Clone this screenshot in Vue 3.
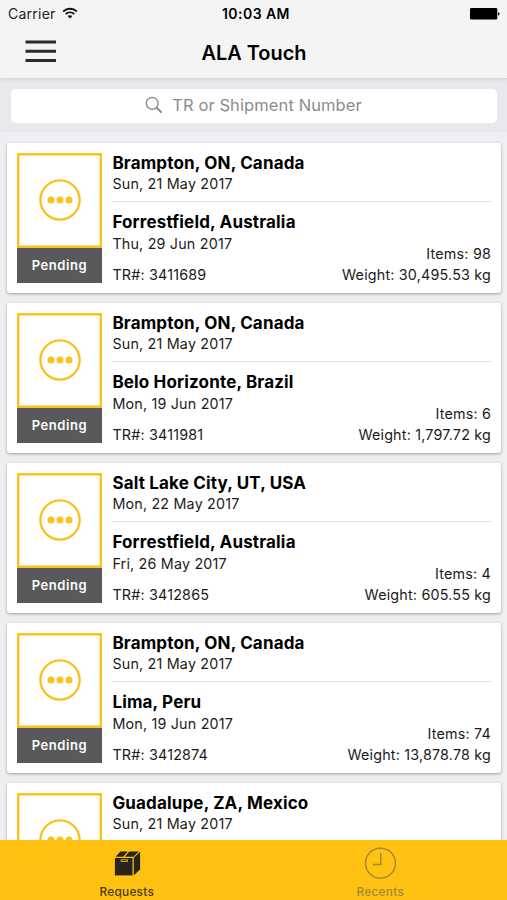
<script setup>
const shipments = [
  { from: 'Brampton, ON, Canada', departs: 'Sun, 21 May 2017', to: 'Forrestfield, Australia', arrives: 'Thu, 29 Jun 2017', tr: '3411689', items: '98', weight: '30,495.53' },
  { from: 'Brampton, ON, Canada', departs: 'Sun, 21 May 2017', to: 'Belo Horizonte, Brazil', arrives: 'Mon, 19 Jun 2017', tr: '3411981', items: '6', weight: '1,797.72' },
  { from: 'Salt Lake City, UT, USA', departs: 'Mon, 22 May 2017', to: 'Forrestfield, Australia', arrives: 'Fri, 26 May 2017', tr: '3412865', items: '4', weight: '605.55' },
  { from: 'Brampton, ON, Canada', departs: 'Sun, 21 May 2017', to: 'Lima, Peru', arrives: 'Mon, 19 Jun 2017', tr: '3412874', items: '74', weight: '13,878.78' },
  { from: 'Guadalupe, ZA, Mexico', departs: 'Sun, 21 May 2017' },
]
</script>

<template>
  <div class="screen">
    <header class="header">
      <div class="status">
        <div class="carrier">
          <span>Carrier</span>
          <svg class="wifi" width="16" height="12" viewBox="0 0 16 12">
            <path d="M1.2 4.5C5 .9 11 .9 14.8 4.5M3.7 7.1c2.5-2.3 6.1-2.3 8.6 0" fill="none" stroke="#111" stroke-width="1.9" />
            <path d="M5.6 9.1c1.4-1.2 3.4-1.2 4.8 0L8 11.6z" fill="#111" />
          </svg>
        </div>
        <span class="time">10:03 AM</span>
        <svg class="battery" width="30" height="12" viewBox="0 0 30 12">
          <rect x="0" y="0" width="27.3" height="11.5" rx="1.3" fill="#000" />
          <path d="M28.1 4c1.9.6 1.9 3.2 0 3.8z" fill="#000" />
        </svg>
      </div>
      <div class="nav">
        <svg class="menu" width="32" height="24" viewBox="0 0 32 24">
          <path d="M.5 2.1h30.5M.5 11.3h30.5M.5 20.5h30.5" stroke="#2b2b2d" stroke-width="3" />
        </svg>
        <h1>ALA Touch</h1>
        <span></span>
      </div>
    </header>

    <div class="search">
      <div class="field">
        <svg width="18" height="18" viewBox="0 0 18 18" fill="none" stroke="#8b8b8e">
          <circle cx="7.2" cy="7.3" r="5.9" stroke-width="1.4" />
          <path d="M11.4 11.5l5.2 5.1" stroke-width="2" />
        </svg>
        <span>TR or Shipment Number</span>
      </div>
    </div>

    <main class="list">
      <article v-for="(s, i) in shipments" :key="i" class="card">
        <div class="badge">
          <div class="frame">
            <svg width="42" height="42" viewBox="0 0 42 42">
              <circle cx="21" cy="21" r="19.6" fill="none" stroke="#fcc11c" stroke-width="2.3" />
              <g fill="#fcc11c">
                <circle cx="12" cy="21" r="3.5" />
                <circle cx="21" cy="21" r="3.5" />
                <circle cx="30" cy="21" r="3.5" />
              </g>
            </svg>
          </div>
          <div v-if="s.to" class="state">Pending</div>
        </div>
        <div class="info">
          <div class="leg origin">
            <h2>{{ s.from }}</h2>
            <p>{{ s.departs }}</p>
          </div>
          <div v-if="s.to" class="details">
            <div class="leg">
              <h2>{{ s.to }}</h2>
              <p>{{ s.arrives }}</p>
              <p class="tr">TR#: {{ s.tr }}</p>
            </div>
            <div class="totals">
              <p>Items: {{ s.items }}</p>
              <p>Weight: {{ s.weight }} kg</p>
            </div>
          </div>
        </div>
      </article>
    </main>

    <footer class="tabs">
      <div class="tab active">
        <svg width="32" height="32" viewBox="0 0 32 32" fill="#29251c">
          <path d="M3.9 11h17.6v17.4H3.9z" />
          <path d="M4.6 9.7L9.4 4.4h7.4l-4.6 5.3zM13.8 9.7l4.5-5.3h9.6l-5.4 5.3z" />
          <path d="M22.8 10.8l6.3-6v17.6l-6.3 5.8z" />
          <path d="M9.7 12.4h7.2v2.4H9.7z" fill="#ffc112" />
          <path d="M10.5 13.2h5.6v.8h-5.6z" />
        </svg>
        <span>Requests</span>
      </div>
      <div class="tab">
        <svg width="32" height="32" viewBox="0 0 32 32" fill="none" stroke="#a2893a" stroke-width="1.5">
          <circle cx="16.5" cy="16.2" r="15" />
          <path d="M16.7 6v11.5H9" />
        </svg>
        <span>Recents</span>
      </div>
    </footer>
  </div>
</template>

<style>
body {
  margin: 0;
  overflow: hidden;
}
</style>

<style scoped>
.screen {
  width: 507px;
  height: 900px;
  display: flex;
  flex-direction: column;
  overflow: hidden;
  background: #efeff2;
  color: #000;
  font-family: Inter, "Liberation Sans", sans-serif;
}
h1, h2, p {
  margin: 0;
}
svg {
  display: block;
  flex: none;
}
.header {
  height: 78px;
  flex: none;
  background: #f4f4f4;
  border-bottom: 1px solid #d8d8da;
  box-shadow: 0 1px 2px rgba(0, 0, 0, .08);
  z-index: 1;
}
.status {
  height: 27px;
  padding: 0 7px 0 8px;
  display: grid;
  grid-template-columns: 1fr auto 1fr;
  align-items: center;
  font-size: 14px;
  line-height: 27px;
}
.carrier {
  display: flex;
  align-items: center;
  gap: 6px;
  letter-spacing: .25px;
  color: #222;
}
.wifi {
  margin-bottom: 2px;
}
.time {
  font-weight: 600;
  letter-spacing: .45px;
  padding-left: 4px;
}
.battery {
  justify-self: end;
}
.nav {
  height: 51px;
  padding: 0 24px 0 25px;
  display: grid;
  grid-template-columns: 1fr auto 1fr;
  align-items: center;
}
.menu {
  margin-bottom: 2px;
}
.nav h1 {
  font-size: 19.9px;
  font-weight: 600;
  line-height: 50px;
}
.search {
  height: 34px;
  flex: none;
  padding: 10px 10px 9px 11px;
  background: #e8e8ed;
}
.field {
  height: 32px;
  padding: 0 1px 2px 0;
  display: flex;
  align-items: center;
  justify-content: center;
  gap: 9px;
  border-radius: 5px;
  background: #fff;
  color: #8b8b8e;
  font-size: 16.5px;
  letter-spacing: .1px;
}
.list {
  flex: 1;
  min-height: 0;
  padding: 10.5px 6px 0 7px;
  display: flex;
  flex-direction: column;
  gap: 10px;
  overflow: hidden;
}
.card {
  height: 150px;
  flex: none;
  box-sizing: border-box;
  padding: 10px 10px 0 9.6px;
  display: flex;
  gap: 10.2px;
  border-radius: 3px;
  background: #fff;
  box-shadow: 0 1px 3px rgba(0, 0, 0, .35);
}
.badge {
  width: 85.6px;
  flex: none;
}
.frame {
  height: 95px;
  box-sizing: border-box;
  padding-left: 1.4px;
  display: flex;
  align-items: center;
  justify-content: center;
  box-shadow: inset 0 0 0 2.4px #fcc11c;
}
.state {
  height: 35px;
  background: #58595b;
  color: #fff;
  font-size: 13px;
  font-weight: 600;
  line-height: 35px;
  text-align: center;
  letter-spacing: .55px;
}
.info {
  flex: 1;
}
.leg h2 {
  font-size: 17px;
  font-weight: 700;
  line-height: 21px;
  letter-spacing: .16px;
  white-space: nowrap;
}
.info p {
  font-size: 14.3px;
  line-height: 21px;
  letter-spacing: .2px;
  color: #1b1b1b;
}
.origin {
  height: 48.5px;
}
.origin p {
  line-height: 20px;
}
.details {
  border-top: 1px solid #e2e2e4;
  padding-top: 10px;
  display: flex;
  justify-content: space-between;
}
.leg .tr {
  margin-top: 9.5px;
}
.totals {
  margin-top: 32.4px;
  text-align: right;
}
.totals p {
  line-height: 20.5px;
}
.tabs {
  height: 60px;
  flex: none;
  display: grid;
  grid-template-columns: 1fr 1fr;
  background: #ffc112;
}
.tab {
  padding-top: 7px;
  display: flex;
  flex-direction: column;
  align-items: center;
  gap: 6px;
  color: #a2893a;
  font-size: 11.8px;
  font-weight: 500;
  line-height: 15px;
  letter-spacing: .3px;
}
.tab.active {
  color: #4d3d14;
}
</style>
